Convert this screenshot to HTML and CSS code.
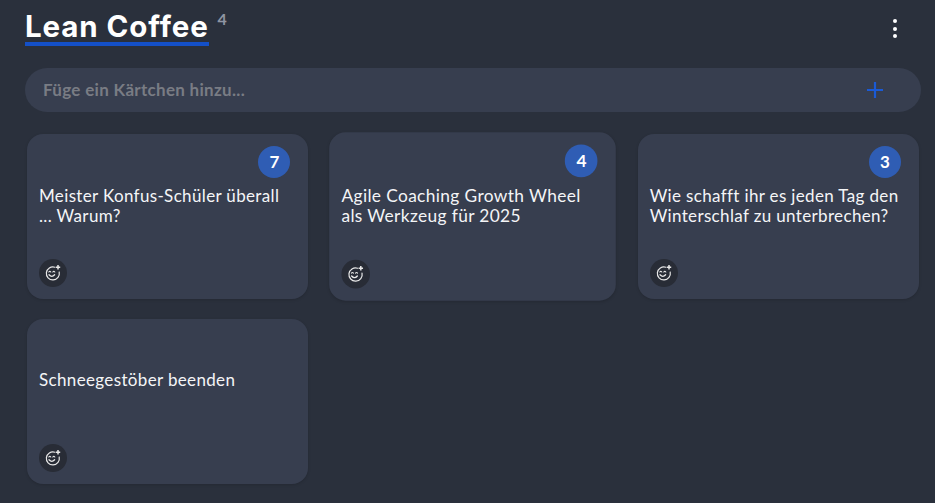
FILE: index.html
```html
<!DOCTYPE html>
<html lang="de">
<head>
  <meta charset="UTF-8">
  <title>Lean Coffee</title>
  <link rel="stylesheet" href="styles.css">
</head>
<body>

<header class="top">
  <div class="title-wrap">
    <h1 class="title">Lean Coffee</h1>
    <span class="count">4</span>
  </div>
  <button class="menu" aria-label="Menü">
    <span class="dot"></span>
    <span class="dot"></span>
    <span class="dot"></span>
  </button>
</header>

<div class="add-bar">
  <span class="placeholder">Füge ein Kärtchen hinzu...</span>
  <svg class="plus" width="20" height="20" viewBox="0 0 20 20">
    <path d="M10 2v16M2 10h16" stroke="#1a5ad6" stroke-width="2.2" fill="none"/>
  </svg>
</div>

<div class="cards">
  <div class="card">
    <div class="votes-row"><span class="votes">7</span></div>
    <p class="text">Meister Konfus-Schüler überall<br>... Warum?</p>
    <button class="react">
      <svg width="18" height="18" viewBox="0 0 18 18"><use href="#smile"/></svg>
    </button>
  </div>

  <div class="card card-hover">
    <div class="votes-row"><span class="votes">4</span></div>
    <p class="text">Agile Coaching Growth Wheel<br>als Werkzeug für 2025</p>
    <button class="react">
      <svg width="18" height="18" viewBox="0 0 18 18"><use href="#smile"/></svg>
    </button>
  </div>

  <div class="card">
    <div class="votes-row"><span class="votes">3</span></div>
    <p class="text">Wie schafft ihr es jeden Tag den<br>Winterschlaf zu unterbrechen?</p>
    <button class="react">
      <svg width="18" height="18" viewBox="0 0 18 18"><use href="#smile"/></svg>
    </button>
  </div>

  <div class="card card-single">
    <p class="text">Schneegestöber beenden</p>
    <button class="react">
      <svg width="18" height="18" viewBox="0 0 18 18"><use href="#smile"/></svg>
    </button>
  </div>
</div>

<svg class="defs" width="0" height="0">
  <symbol id="smile" viewBox="0 0 18 18">
    <path d="M10.8 3.2A6.5 6.5 0 1 0 15.2 8" fill="none" stroke="#e8e8e8" stroke-width="1.2" stroke-linecap="round"/>
    <path d="M4.8 8q1-1.2 2 0M8.8 8q1-1.2 2 0" fill="none" stroke="#e8e8e8" stroke-width="1.1" stroke-linecap="round"/>
    <path d="M5 10.8q2.8 3.2 5.6 0" fill="none" stroke="#e8e8e8" stroke-width="1.3" stroke-linecap="round"/>
    <path d="M14 1v4.4M11.8 3.2h4.4" stroke="#e8e8e8" stroke-width="1.5"/>
  </symbol>
</svg>

</body>
</html>
```

FILE: styles.css
```css
html, body {
  height: 100%;
}

body {
  margin: 0;
  padding: 0 14px 0 25px;
  overflow: hidden;
  background-color: #2a303c;
  color: white;
  font-family: "Lato", "Open Sans", sans-serif;
}

button {
  border: none;
  background: none;
  padding: 0;
}

.top {
  display: flex;
  justify-content: space-between;
  align-items: flex-start;
  height: 68px;
}

.title-wrap {
  display: flex;
  align-items: flex-start;
  padding-top: 8px;
}

.title {
  margin: 0;
  height: 34px;
  border-bottom: 4px solid #1450c8;
  font-family: "Inter", sans-serif;
  font-size: 29.5px;
  font-weight: 700;
  line-height: 37px;
  letter-spacing: 0.9px;
}

.count {
  margin-left: 9px;
  margin-top: 2px;
  color: #8f95a3;
  font-size: 16px;
  font-weight: 700;
  line-height: 18px;
}

.menu {
  display: flex;
  flex-direction: column;
  align-items: center;
  gap: 3.5px;
  margin: 19px 14px 0 0;
  width: 24px;
}

.dot {
  width: 4px;
  height: 4px;
  border-radius: 50%;
  background-color: white;
}

.add-bar {
  display: flex;
  align-items: center;
  justify-content: space-between;
  width: 896px;
  height: 44px;
  padding: 0 36px 0 18px;
  box-sizing: border-box;
  border-radius: 22px;
  background-color: #373e4f;
}

.placeholder {
  margin-top: -2px;
  color: #797c84;
  font-size: 17px;
  font-weight: 700;
  letter-spacing: 0.3px;
}

.plus {
  display: block;
}

.cards {
  display: grid;
  grid-template-columns: repeat(3, 281.33px);
  column-gap: 24px;
  row-gap: 20px;
  margin: 22px 0 0 2px;
}

.card {
  display: flex;
  flex-direction: column;
  height: 165px;
  padding: 12px;
  box-sizing: border-box;
  border-radius: 16px;
  background-color: #373e4f;
  box-shadow: 0 1px 3px rgba(0, 0, 0, 0.15);
}

.card-hover {
  transform: scale(1.02);
}

.card-single {
  justify-content: flex-end;
}

.votes-row {
  display: flex;
  justify-content: flex-end;
  padding-right: 6px;
}

.votes {
  width: 32px;
  height: 32px;
  border-radius: 50%;
  background-color: #2f5db4;
  font-size: 17px;
  font-weight: 700;
  line-height: 32px;
  text-align: center;
}

.text {
  flex: 1;
  margin: 8px 0 0;
  font-size: 17px;
  letter-spacing: 0.35px;
  line-height: 20px;
  color: #f4f5f7;
}

.card-single .text {
  flex: none;
  margin: 0 0 54px;
}

.react {
  display: flex;
  align-items: center;
  justify-content: center;
  width: 28px;
  height: 28px;
  border-radius: 50%;
  background-color: #282c36;
}

.react svg {
  display: block;
}

.defs {
  position: absolute;
}
```
